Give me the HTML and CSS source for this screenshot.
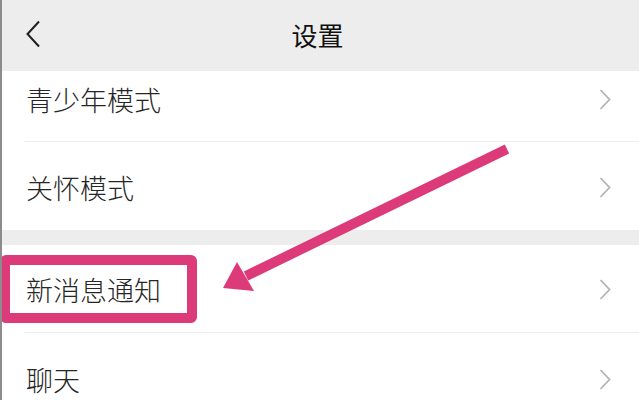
FILE: index.html
```html
<!DOCTYPE html>
<html lang="zh-CN">
<head>
<meta charset="utf-8">
<title>设置</title>
<link rel="stylesheet" href="styles.css">
</head>
<body>
<div class="screen">
  <header class="topbar">
    <svg class="back" width="16" height="28" viewBox="0 0 16 28"><path d="M14 1.5 L2.5 14 L14 26.5" fill="none" stroke="#1f1f1f" stroke-width="2"/></svg>
    <h1 class="title">设置</h1>
  </header>
  <div class="list">
    <div class="row row-first"><span class="label">青少年模式</span><svg class="chev" width="12" height="21" viewBox="0 0 12 21"><path d="M1.5 1 L10.5 10.5 L1.5 20" fill="none" stroke="#b4b4b4" stroke-width="1.8"/></svg></div>
    <div class="row row-b"><span class="label">关怀模式</span><svg class="chev" width="12" height="21" viewBox="0 0 12 21"><path d="M1.5 1 L10.5 10.5 L1.5 20" fill="none" stroke="#b4b4b4" stroke-width="1.8"/></svg></div>
  </div>
  <div class="gap"></div>
  <div class="list">
    <div class="row row-c"><span class="label">新消息通知</span><svg class="chev" width="12" height="21" viewBox="0 0 12 21"><path d="M1.5 1 L10.5 10.5 L1.5 20" fill="none" stroke="#b4b4b4" stroke-width="1.8"/></svg></div>
    <div class="row row-d"><span class="label">聊天</span><svg class="chev" width="12" height="21" viewBox="0 0 12 21"><path d="M1.5 1 L10.5 10.5 L1.5 20" fill="none" stroke="#b4b4b4" stroke-width="1.8"/></svg></div>
  </div>
  <div class="highlight"></div>
  <svg class="arrow" width="639" height="400" viewBox="0 0 639 400">
    <line x1="507" y1="149" x2="246" y2="276" stroke="#dc3a78" stroke-width="10"/>
    <polygon points="223,288 237,262 254,291" fill="#dc3a78"/>
  </svg>
</div>
</body>
</html>
```

FILE: styles.css
```css
html, body {
  margin: 0;
  padding: 0;
  background: #ffffff;
}
.screen {
  position: relative;
  width: 637px;
  height: 400px;
  overflow: hidden;
  border-left: 2px solid #8c8c8c;
  background: #ffffff;
  font-family: "Noto Sans CJK SC", "Noto Sans", sans-serif;
  color: #1c1c1c;
}
.topbar {
  height: 71px;
  background: #ededed;
  display: flex;
  align-items: center;
  position: relative;
}
.back {
  margin-left: 23px;
  margin-top: -4px;
}
.title {
  position: absolute;
  left: 0;
  right: 0;
  top: 22px;
  margin: 0;
  text-align: center;
  font-size: 26px;
  line-height: 26px;
  font-weight: 400;
  color: #111111;
  padding-right: 6px;
}
.list {
  margin-left: 23px;
}
.row {
  display: flex;
  align-items: center;
  justify-content: space-between;
  padding-right: 28px;
  box-sizing: border-box;
  border-bottom: 1px solid #ececec;
}
.row:last-child {
  border-bottom: none;
}
.label {
  font-size: 27px;
  line-height: 27px;
  font-weight: 300;
  margin-left: 1px;
  color: #262626;
}
.row-first {
  height: 71px;
  padding-bottom: 14px;
}
.row-b {
  height: 88px;
  padding-top: 3px;
}
.row-c {
  height: 88px;
  padding-top: 2px;
}
.row-d {
  height: 88px;
  padding-top: 4px;
}
.gap {
  height: 15px;
  background: #ededed;
}
.highlight {
  position: absolute;
  left: -2px;
  top: 255px;
  width: 197px;
  height: 68px;
  box-sizing: border-box;
  border: 10px solid #dc3a78;
  border-radius: 6px;
}
.arrow {
  position: absolute;
  left: -2px;
  top: 0;
}
```
